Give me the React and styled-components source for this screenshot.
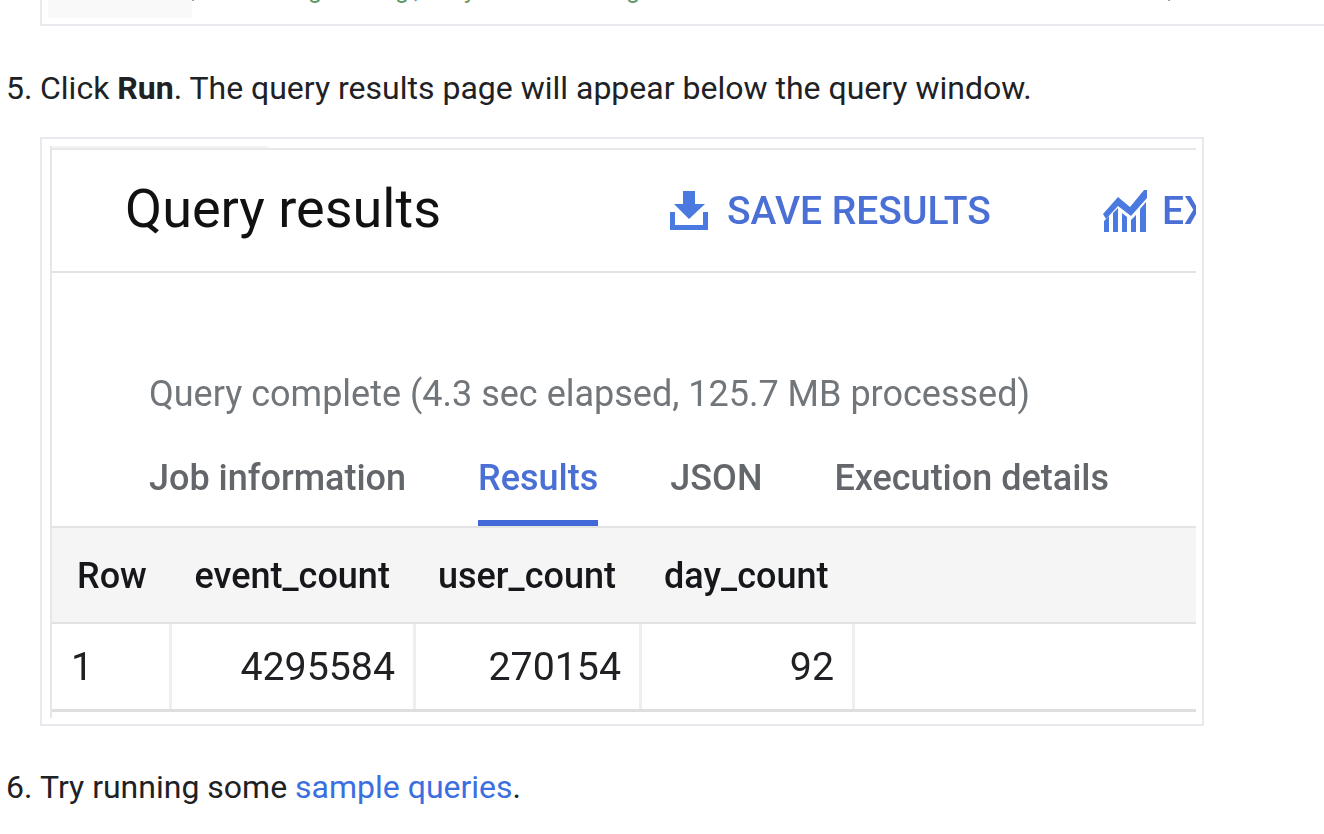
import React from 'react'
import styled, { createGlobalStyle } from 'styled-components'

const GlobalStyle = createGlobalStyle`
  html, body {
    margin: 0;
    background: #fff;
    overflow: hidden;
  }
  body {
    font-family: Roboto, "Liberation Sans", sans-serif;
    color: #202124;
  }
`

const Page = styled.div`
  width: 1324px;
  height: 834px;
  overflow: hidden;
`

// bottom of the code sample that is scrolled off the top
const CodeFrame = styled.div`
  box-sizing: border-box;
  margin-left: 40px;
  height: 26px;
  display: flex;
  align-items: flex-start;
  padding-left: 6px;
  border-left: 2px solid #e8e8ee;
  border-bottom: 2px solid #e8e8ee;
`

const Gutter = styled.div`
  width: 144px;
  height: 18px;
  background: #f9f9f9;
  flex: none;
`

const Tail = styled.span`
  flex: none;
  margin-left: ${p => p.$gap}px;
  width: ${p => p.$w || 14}px;
  height: 4px;
  overflow: hidden;
  font-size: 25px;
  line-height: 26px;
  color: ${p => p.$color};

  & > span {
    display: block;
    margin-top: -23px;
  }
`

const Step = styled.div`
  display: flex;
  margin-top: ${p => p.$top}px;
  font-size: 32px;
  line-height: 44px;
  color: #202124;
`

const StepNo = styled.span`
  width: 34px;
  margin-left: 6px;
  flex: none;
`

const StepLink = styled.a`
  color: #3b6fe0;
  text-decoration: none;
`

const Shot = styled.div`
  box-sizing: border-box;
  width: 1164px;
  height: 589px;
  margin: 27px 0 0 40px;
  padding: 7px 6px 0 8px;
  border: 2px solid #e8e8ee;
`

const ShotInner = styled.div`
  width: 1146px;
  height: 572px;
  border-left: 2px solid #e6e6e6;
  box-sizing: border-box;
  overflow: hidden;
  filter: blur(0.5px);
`

const FaintStrip = styled.div`
  width: 216px;
  height: 2px;
  background: #f3f3f3;
`

const ResultsHeader = styled.div`
  box-sizing: border-box;
  height: 125px;
  display: flex;
  align-items: center;
  border-top: 2px solid #e8e8e8;
  border-bottom: 2px solid #e4e4e4;
  padding-left: 73px;
  white-space: nowrap;
`

const ResultsTitle = styled.div`
  width: 545px;
  flex: none;
  padding-bottom: 4px;
  font-size: 54px;
  line-height: 60px;
  color: #111;
`

const HeaderAction = styled.div`
  display: flex;
  align-items: center;
  gap: ${p => p.$gap}px;
  margin-right: ${p => p.$after || 0}px;
  font-size: 39px;
  font-weight: 500;
  color: #4a70d6;
  flex: none;
`

const StatusLine = styled.div`
  margin-top: 99px;
  padding-left: 97px;
  font-size: 36px;
  line-height: 44px;
  color: #71767b;
  white-space: nowrap;
`

const TabRow = styled.div`
  display: flex;
  gap: 72px;
  height: 110px;
  padding-left: 97px;
`

const Tab = styled.div`
  box-sizing: border-box;
  height: 110px;
  padding-top: 40px;
  font-size: 36px;
  font-weight: 500;
  line-height: 44px;
  white-space: nowrap;
  color: ${p => (p.$active ? '#4a70d6' : '#63676c')};
  border-bottom: 6px solid ${p => (p.$active ? '#4169d8' : 'transparent')};
`

const TableHead = styled.div`
  box-sizing: border-box;
  height: 98px;
  display: grid;
  grid-template-columns: 120px 244px 226px 213px 1fr;
  align-items: center;
  background: #f5f5f5;
  border-top: 2px solid #e4e4e4;
  border-bottom: 2px solid #e2e2e2;
  font-size: 36px;
  font-weight: 500;
  color: #16171a;
`

const HeadCell = styled.div`
  padding: 2px 0 0 ${p => p.$pad}px;
  white-space: nowrap;
`

const TableRow = styled.div`
  box-sizing: border-box;
  height: 88px;
  display: grid;
  grid-template-columns: 120px 244px 226px 213px 1fr;
  border-bottom: 3px solid #dedede;
  font-size: 39.3px;
  color: #202124;
`

const DataCell = styled.div`
  display: flex;
  align-items: center;
  justify-content: ${p => (p.$num ? 'flex-end' : 'flex-start')};
  padding: ${p => (p.$num ? '0 18px 0 0' : '0 0 0 19px')};
  border-right: ${p => (p.$last ? 'none' : '3px solid #eeeeee')};
`

const SaveIcon = () => (
  <svg width="38" height="39" viewBox="0 0 38 39" fill="#4a7ae0">
    <path d="M13 0h12v13h10L19 28 4 13h9z" />
    <path d="M0 21h5v13h28V21h5v18H0z" />
  </svg>
)

const ChartIcon = () => (
  <svg width="44" height="42" viewBox="0 0 44 42" fill="#4a7ae0">
    <path d="M0 24L15 7l12 10L41 0h3v8L28 26 15 16 3 29z" />
    <path d="M1 31l5-5v16H1zM10 23l5-5v24h-5zM19 23l5 4v15h-5zM28 30l5-5v17h-5zM37 19l6-7v30h-6z" />
  </svg>
)

export default function App() {
  return (
    <Page>
      <GlobalStyle />
      <CodeFrame>
        <Gutter />
        <Tail $gap={-2} $w={4} $color="#8a8a8a"><span>|</span></Tail>
        <Tail $gap={114} $color="#5f9a6a"><span>g</span></Tail>
        <Tail $gap={73} $color="#5f9a6a"><span>g</span></Tail>
        <Tail $gap={5} $color="#5aa0a8"><span>,</span></Tail>
        <Tail $gap={36} $color="#7a9a5a"><span>y</span></Tail>
        <Tail $gap={148} $color="#5f9a6a"><span>g</span></Tail>
        <Tail $gap={31} $color="#d8d8d8"><span>_</span></Tail>
        <Tail $gap={144} $color="#d8d8d8"><span>_</span></Tail>
        <Tail $gap={43} $color="#d8d8d8"><span>_</span></Tail>
        <Tail $gap={231} $color="#d8d8d8"><span>_</span></Tail>
        <Tail $gap={21} $w={4} $color="#8a8a8a"><span>|</span></Tail>
      </CodeFrame>

      <Step $top={40}>
        <StepNo>5.</StepNo>
        <span>Click <b>Run</b>. The query results page will appear below the query window.</span>
      </Step>

      <Shot>
        <ShotInner>
          <FaintStrip />
          <ResultsHeader>
            <ResultsTitle>Query results</ResultsTitle>
            <HeaderAction $gap={19} $after={112}><SaveIcon />SAVE RESULTS</HeaderAction>
            <HeaderAction $gap={15}><ChartIcon />EXPLORE DATA</HeaderAction>
          </ResultsHeader>
          <StatusLine>Query complete (4.3 sec elapsed, 125.7 MB processed)</StatusLine>
          <TabRow>
            <Tab>Job information</Tab>
            <Tab $active>Results</Tab>
            <Tab>JSON</Tab>
            <Tab>Execution details</Tab>
          </TabRow>
          <TableHead>
            <HeadCell $pad={25}>Row</HeadCell>
            <HeadCell $pad={22.5}>event_count</HeadCell>
            <HeadCell $pad={22}>user_count</HeadCell>
            <HeadCell $pad={22}>day_count</HeadCell>
          </TableHead>
          <TableRow>
            <DataCell>1</DataCell>
            <DataCell $num>4295584</DataCell>
            <DataCell $num>270154</DataCell>
            <DataCell $num>92</DataCell>
            <DataCell $last />
          </TableRow>
        </ShotInner>
      </Shot>

      <Step $top={39}>
        <StepNo>6.</StepNo>
        <span>Try running some <StepLink href="#">sample queries</StepLink>.</span>
      </Step>
    </Page>
  )
}
